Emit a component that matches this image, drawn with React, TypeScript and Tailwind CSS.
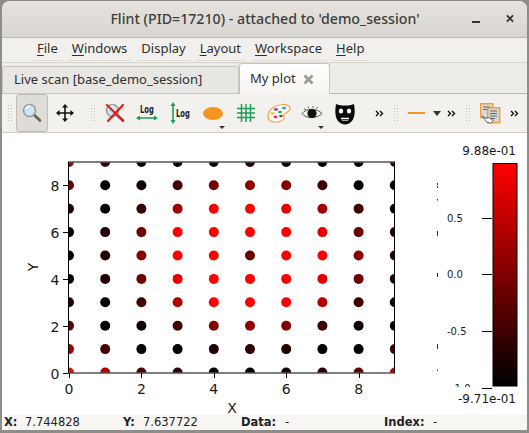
const UI_FONT = "font-['Noto_Sans',sans-serif]";

// colours read from the scatter, row y=9 at the top, x=0..9 left to right
const GRID = [
  ["#a00000", "#400000", "#000000", "#000000", "#100000", "#200000", "#100000", "#000000", "#000000", "#500000"],
  ["#700000", "#000000", "#100000", "#400000", "#700000", "#900000", "#800000", "#400000", "#000000", "#000000"],
  ["#200000", "#000000", "#300000", "#a00000", "#ff0000", "#ff0000", "#e80000", "#a00000", "#400000", "#000000"],
  ["#000000", "#200000", "#700000", "#ff0000", "#ff0000", "#ff0000", "#ff0000", "#e80000", "#700000", "#200000"],
  ["#000000", "#200000", "#880000", "#ff0000", "#ff0000", "#680000", "#ff0000", "#ff0000", "#900000", "#200000"],
  ["#000000", "#200000", "#700000", "#e80000", "#ff0000", "#ff0000", "#ff0000", "#e00000", "#700000", "#200000"],
  ["#200000", "#000000", "#400000", "#b00000", "#ff0000", "#ff0000", "#f80000", "#b00000", "#400000", "#000000"],
  ["#600000", "#000000", "#100000", "#400000", "#800000", "#900000", "#800000", "#400000", "#100000", "#000000"],
  ["#a00000", "#400000", "#000000", "#000000", "#200000", "#300000", "#200000", "#000000", "#000000", "#400000"],
  ["#ff0000", "#b80000", "#500000", "#300000", "#000000", "#000000", "#100000", "#300000", "#600000", "#c80000"],
];

const px = (x: number) => 69 + x * 36.2;
const py = (y: number) => 372.5 - y * 23.4;

function Handle({ className = "" }: { className?: string }) {
  return (
    <div className={`flex justify-center shrink-0 ${className}`}>
      <svg width="5" height="17" viewBox="0 0 5 17">
        {[0, 3, 6, 9, 12, 15].map((y) => (
          <g key={y} fill="#c4c1bb">
            <rect x="0" y={y} width="1" height="1" />
            <rect x="3" y={y} width="1" height="1" />
          </g>
        ))}
      </svg>
    </div>
  );
}

function More({ className = "" }: { className?: string }) {
  return (
    <svg className={className} width="9" height="7" viewBox="0 0 9 7" fill="none" stroke="#111" strokeWidth="1.4">
      <path d="M1 1l2.5 2.5L1 6M5 1l2.5 2.5L5 6" />
    </svg>
  );
}

function Slot({ children, className = "w-[33px]" }: { children: React.ReactNode; className?: string }) {
  return <div className={`relative flex items-center justify-center h-full shrink-0 ${className}`}>{children}</div>;
}

function Caret() {
  return <div className="absolute right-[4px] bottom-[3px] w-0 h-0 border-x-[3px] border-x-transparent border-t-[3px] border-t-[#333]" />;
}

function Magnifier({ crossed = false }: { crossed?: boolean }) {
  return (
    <svg width="22" height="22" viewBox="0 0 22 22">
      <path d="M12 12l7 6.5" stroke="#6b5f50" strokeWidth="2.6" strokeLinecap="round" />
      <circle cx="8.5" cy="8.5" r="6" fill="#cfe4f4" stroke="#9a9a9a" strokeWidth="1.6" />
      <path d="M5 7a4 4 0 0 1 4-3" stroke="#fff" strokeWidth="1.4" fill="none" />
      {crossed && <path d="M3 3l16 16M19 3L4 19" stroke="#e0201c" strokeWidth="2.2" strokeLinecap="round" />}
    </svg>
  );
}

function Pan() {
  return (
    <svg width="18" height="18" viewBox="0 0 18 18" fill="#111">
      <path d="M8.2 3h1.6v12H8.2zM3 8.2h12v1.6H3z" />
      <path d="M9 0l3 3.6H6zM9 18l-3-3.6h6zM0 9l3.6-3v6zM18 9l-3.6 3V6z" />
    </svg>
  );
}

function LogX() {
  return (
    <svg width="22" height="20" viewBox="0 0 22 20">
      <text transform="translate(4 10) scale(0.68 1)" fontSize="10" fontWeight="700" fill="#222" fontFamily="DejaVu Sans">Log</text>
      <path d="M2 15h18" stroke="#1e9e55" strokeWidth="1.6" />
      <path d="M0 15l4-2.6v5.2zM22 15l-4-2.6v5.2z" fill="#1e9e55" />
    </svg>
  );
}

function LogY() {
  return (
    <svg width="22" height="22" viewBox="0 0 22 22">
      <path d="M4 2v18" stroke="#1e9e55" strokeWidth="1.6" />
      <path d="M4 0l-2.6 4h5.2zM4 22l-2.6-4h5.2z" fill="#1e9e55" />
      <text transform="translate(7 15) scale(0.68 1)" fontSize="10" fontWeight="700" fill="#222" fontFamily="DejaVu Sans">Log</text>
    </svg>
  );
}

function GridIcon() {
  return (
    <svg width="18" height="18" viewBox="0 0 18 18" stroke="#1e9e55" strokeWidth="1.5">
      <path d="M4.5 0v18M9 0v18M13.5 0v18M0 4.5h18M0 9h18M0 13.5h18" />
    </svg>
  );
}

function Palette() {
  return (
    <svg width="24" height="20" viewBox="0 0 24 20">
      <path d="M1 13C1 7 8 2 15 1.5 20 1 23.500 3 23 6c-.5 3-5 3.500-6 5.500-.8 1.800 1 3-.5 5C14.500 19 8 19.500 4.500 18.500 2 17.800 1 16 1 13z" fill="#fff8ec" stroke="#f0a24a" strokeWidth="1.2" />
      <ellipse cx="9" cy="6.500" rx="2" ry="1.300" fill="#7a32b8" />
      <ellipse cx="17" cy="5" rx="2.200" ry="1.300" fill="#28a8e0" />
      <ellipse cx="5.500" cy="10.500" rx="2" ry="1.300" fill="#e8c020" />
      <ellipse cx="13" cy="9" rx="2" ry="1.300" fill="#30b040" />
      <ellipse cx="8.500" cy="14" rx="2" ry="1.300" fill="#e02890" />
      <ellipse cx="14" cy="13" rx="1.800" ry="1.200" fill="#555" />
    </svg>
  );
}

function Eye() {
  return (
    <svg width="22" height="16" viewBox="0 0 22 16">
      <path d="M1 8.500C5 3 16 3 21 8.500 16 14 5 14 1 8.500z" fill="#f4f2ee" stroke="#555" strokeWidth="1" />
      <circle cx="11" cy="8.500" r="4.600" fill="#111" />
      <path d="M3 3.500l2 1.500M7 1.500l1 2M12 1l0 2M16.500 2l-1 1.800" stroke="#555" strokeWidth="0.9" />
    </svg>
  );
}

function Mask() {
  return (
    <svg width="20" height="23" viewBox="0 0 20 23">
      <path d="M1 2c5 2 13 2 18 0 1.200 7 1 13-2 17-2 2.500-5 3.500-7 3.500S5 21.500 3 19C0 15-.2 9 1 2z" fill="#0a0a0a" />
      <ellipse cx="6" cy="9" rx="2.200" ry="2.500" fill="#fff" />
      <ellipse cx="14" cy="9" rx="2.200" ry="2.500" fill="#fff" />
      <path d="M6 16.500h8" stroke="#fff" strokeWidth="1.400" />
      <path d="M7 18.500h6" stroke="#ccc" strokeWidth="0.800" />
    </svg>
  );
}

function CopyIcon() {
  return (
    <svg width="21" height="21" viewBox="0 0 21 21">
      <rect x="0.700" y="0.700" width="12" height="14" fill="#d8d8d4" stroke="#f0a030" strokeWidth="1.400" />
      <rect x="7.700" y="4.700" width="12" height="15" fill="#d4d4d0" stroke="#f0a030" strokeWidth="1.400" />
      <path d="M3 4h7M3 6.500h4M10 8h7M10 10.500h7M10 13h7M10 15.500h5" stroke="#666" strokeWidth="1" />
      <path d="M2 13l4 2.500 3-1 4 3-2 3-5-2z" fill="#fff" stroke="#333" strokeWidth="0.700" />
    </svg>
  );
}

function MenuItem({ label, under }: { label: string; under?: string }) {
  const rest = under ? label.slice(under.length) : label;
  return (
    <span className="border-b border-[#dedbd5] pb-[1px] px-[4px] mr-[6px]">
      {under && <span className="underline underline-offset-2">{under}</span>}
      {rest}
    </span>
  );
}

function Plot() {
  return (
    <svg width="525" height="282" viewBox="2 133 525 282" className="block" fontFamily="DejaVu Sans" fill="#1a1a1a">
      <defs>
        <clipPath id="axes">
          <rect x="69" y="162.500" width="325.500" height="210" />
        </clipPath>
        <linearGradient id="hot" x1="0" y1="0" x2="0" y2="1">
          <stop offset="0" stopColor="#ff0000" />
          <stop offset="1" stopColor="#000000" />
        </linearGradient>
      </defs>

      <g clipPath="url(#axes)">
        {GRID.map((row, r) =>
          row.map((c, i) => <circle key={`${r}-${i}`} cx={px(i)} cy={py(9 - r)} r="5" fill={c} />)
        )}
      </g>
      <rect x="68.500" y="162" width="326" height="211" fill="none" stroke="#000" strokeWidth="1" />

      {[0, 2, 4, 6, 8].map((v) => (
        <g key={v}>
          <path d={`M${Math.round(px(v)) + 0.5} 373v5`} stroke="#000" />
          <path d={`M63 ${Math.round(py(v)) + 0.5}h5`} stroke="#000" />
          <text x={px(v)} y="394" textAnchor="middle" fontSize="14">{v}</text>
          <text x="55" y={py(v) + 6} textAnchor="middle" fontSize="14">{v}</text>
        </g>
      ))}
      <text x="232" y="413" textAnchor="middle" fontSize="14">X</text>
      <text transform="translate(38 267) rotate(-90)" textAnchor="middle" fontSize="14">Y</text>

      {/* stray slivers of the clipped label column */}
      <path d="M437.500 183v2M437.500 186v2M437.500 199v1.500M437.500 231v5M437.500 344v2M437.500 346v3M437.500 369.500v1.500" stroke="#333" />
      <path d="M437.500 273v4" stroke="#8a0000" />

      <text x="516" y="155" textAnchor="end" fontSize="12">9.88e-01</text>
      <rect x="493" y="163.500" width="24" height="222.500" fill="url(#hot)" stroke="#000" />
      {[
        ["0.5", 218.500],
        ["0.0", 274.500],
        ["-0.5", 331.500],
      ].map(([l, y]) => (
        <g key={l}>
          <path d={`M482 ${y}h10`} stroke="#000" />
          <text x="447" y={Number(y) + 3.500} fontSize="10">{l}</text>
        </g>
      ))}
      <path d="M482 388.500h10" stroke="#000" />
      <text x="451" y="391.500" fontSize="10">-1.0</text>
      <rect x="450" y="387" width="32" height="10" fill="#fff" />
      <text x="516" y="403" textAnchor="end" fontSize="12">-9.71e-01</text>
    </svg>
  );
}

export default function App() {
  return (
    <div className={`w-[529px] h-[433px] overflow-hidden bg-[#8f8d8a] ${UI_FONT}`}>
      <div className="flex flex-col h-[429px] mx-[2px] mt-[1px] rounded-t-[8px] overflow-hidden bg-[#f2f0ec]">
        {/* title bar */}
        <div className="relative flex items-center justify-center h-[37px] shrink-0 bg-gradient-to-b from-[#e6e3df] to-[#d9d6d1] border-b border-[#bdb9b3] text-[14.200px] font-medium text-[#3d3d3a]">
          <span className="ml-[1px]">Flint (PID=17210) - attached to 'demo_session'</span>
          <div className="absolute right-[13px] top-[11px] w-[8px] h-[13px] flex items-center justify-center">
            <svg width="9" height="9" viewBox="0 0 9 9" stroke="#333" strokeWidth="2">
              <path d="M1 1l7 7M8 1L1 8" />
            </svg>
          </div>
          <div className="absolute right-[47px] top-[20px] w-[8px] h-[2px] bg-[#333]" />
        </div>

        {/* menu */}
        <div className="flex items-center h-[25px] shrink-0 pl-[31px] text-[13px] text-[#2e2e2c] border-b border-[#d8d5cf]">
          <MenuItem label="File" under="F" />
          <MenuItem label="Windows" under="W" />
          <MenuItem label="Display" />
          <MenuItem label="Layout" under="L" />
          <MenuItem label="Workspace" under="W" />
          <MenuItem label="Help" under="H" />
        </div>

        {/* tabs */}
        <div className="flex items-end h-[31px] shrink-0 bg-[#eeece7] border-b border-[#b9b6b0] text-[13px] text-[#2e2e2c]">
          <div className="flex items-center w-[237px] h-[28px] -mb-[1px] pl-[11px] bg-[#e9e7e3] border border-[#c8c5bf] rounded-t-[3px]">
            Live scan [base_demo_session]
          </div>
          <div className="flex items-center w-[91px] h-[31px] -mb-[1px] pl-[10px] bg-gradient-to-b from-white to-[#f6f5f2] border-x border-t border-[#c8c5bf] rounded-t-[3px]">
            My plot
            <svg className="ml-[7px]" width="11" height="11" viewBox="0 0 11 11" stroke="#9c9a96" strokeWidth="2.600">
              <path d="M1.500 1.500l8 8M9.500 1.500l-8 8" />
            </svg>
          </div>
        </div>

        {/* toolbar */}
        <div className="flex items-center h-[39px] shrink-0 bg-[#f3f1ed] border-b border-[#cfccc6]">
          <Handle className="w-[14px] pl-[2px]" />
          <Slot className="w-[32px] h-[31px] bg-[#dedcd8] border border-[#c0bdb7] rounded-[3px]">
            <Magnifier />
          </Slot>
          <Slot className="w-[34px]"><Pan /></Slot>
          <Handle className="w-[16px] pl-[6px]" />
          <Slot><Magnifier crossed /></Slot>
          <Slot className="w-[32px]"><LogX /></Slot>
          <Slot><LogY /></Slot>
          <Slot>
            <svg width="20" height="13" viewBox="0 0 20 13">
              <ellipse cx="10" cy="6.500" rx="10" ry="6.500" fill="#f7941d" />
            </svg>
            <Caret />
          </Slot>
          <Slot><GridIcon /></Slot>
          <Slot><Palette /></Slot>
          <Slot>
            <Eye />
            <Caret />
          </Slot>
          <Slot><Mask /></Slot>
          <Slot className="w-[30px] pl-[7px]"><More /></Slot>
          <Handle className="w-[10px]" />
          <div className="w-[17px] h-[2px] ml-[7px] shrink-0 bg-[#f7941d]" />
          <div className="w-0 h-0 ml-[8px] shrink-0 border-x-[4px] border-x-transparent border-t-[5px] border-t-[#333]" />
          <More className="ml-[6px] shrink-0" />
          <Handle className="w-[22px] pl-[3px]" />
          <Slot className="w-[24px]"><CopyIcon /></Slot>
          <More className="ml-[8px] shrink-0" />
        </div>

        {/* plot canvas */}
        <div className="flex-1 min-h-0 bg-white">
          <Plot />
        </div>

        {/* status bar */}
        <div className="flex items-center h-[15px] shrink-0 bg-[#f8f6f3] text-[11.500px] text-[#222] font-['DejaVu_Sans',sans-serif] whitespace-nowrap">
          <b className="ml-[2px] w-[21px]">X:</b>
          <span className="w-[98px]">7.744828</span>
          <b className="w-[20px]">Y:</b>
          <span className="w-[98px]">7.637722</span>
          <b className="w-[44px]">Data:</b>
          <span className="w-[99px]">-</span>
          <b className="w-[49px]">Index:</b>
          <span>-</span>
        </div>
      </div>
    </div>
  );
}
